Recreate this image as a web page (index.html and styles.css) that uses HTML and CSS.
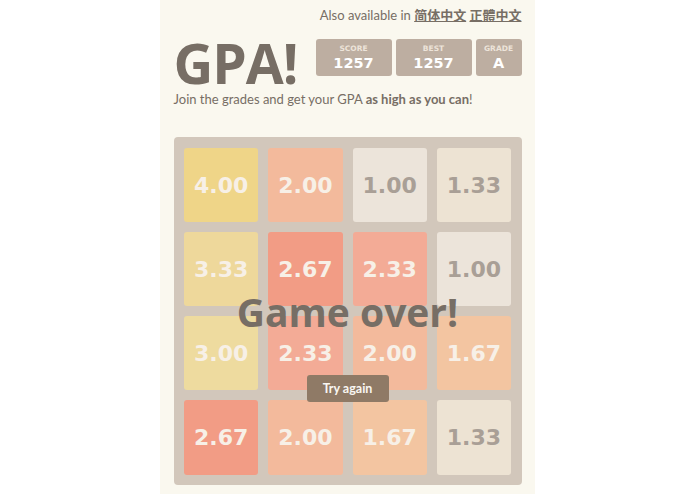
FILE: index.html
```html
<!DOCTYPE html>
<html lang="en">
<head>
<meta charset="utf-8">
<title>GPA!</title>
<link rel="stylesheet" href="styles.css">
</head>
<body>
<div class="page">
  <p class="langs">Also available in <a href="#">简体中文</a> <a href="#">正體中文</a></p>
  <div class="heading">
    <h1 class="title">GPA!</h1>
    <div class="scores">
      <div class="score-box score-wide"><span class="score-label">SCORE</span><span class="score-value">1257</span></div>
      <div class="score-box score-wide"><span class="score-label">BEST</span><span class="score-value">1257</span></div>
      <div class="score-box score-narrow"><span class="score-label">GRADE</span><span class="score-value">A</span></div>
    </div>
  </div>
  <p class="intro">Join the grades and get your GPA <strong>as high as you can</strong>!</p>
  <div class="board">
    <div class="grid">
      <div class="tile t400">4.00</div>
      <div class="tile t200">2.00</div>
      <div class="tile t100">1.00</div>
      <div class="tile t133">1.33</div>
      <div class="tile t333">3.33</div>
      <div class="tile t267">2.67</div>
      <div class="tile t233">2.33</div>
      <div class="tile t100">1.00</div>
      <div class="tile t300">3.00</div>
      <div class="tile t233">2.33</div>
      <div class="tile t200">2.00</div>
      <div class="tile t167">1.67</div>
      <div class="tile t267">2.67</div>
      <div class="tile t200">2.00</div>
      <div class="tile t167">1.67</div>
      <div class="tile t133">1.33</div>
    </div>
    <div class="game-message">
      <p class="over">Game over!</p>
      <a class="retry" href="#">Try again</a>
    </div>
  </div>
</div>
</body>
</html>
```

FILE: styles.css
```css
html, body {
  margin: 0;
  padding: 0;
  background: #ffffff;
}

body {
  font-family: "Open Sans", "Noto Sans CJK SC", sans-serif;
  color: #776e65;
}

.page {
  width: 375px;
  min-height: 494px;
  margin: 0 auto;
  background: #faf8ef;
  padding: 0 13.5px;
  box-sizing: border-box;
  overflow: hidden;
}

.langs {
  margin: 0;
  padding-top: 6px;
  font-family: "Lato", "Noto Sans CJK SC", sans-serif;
  font-size: 13px;
  line-height: 18px;
  text-align: right;
  color: #776e65;
}

.langs a {
  color: #776e65;
  font-weight: bold;
  text-decoration: underline;
  font-family: "Noto Sans CJK SC", sans-serif;
}

.heading {
  display: flex;
  justify-content: space-between;
  align-items: flex-start;
  margin-top: 10.5px;
}

.title {
  margin: 0;
  font-size: 55px;
  line-height: 55px;
  font-weight: bold;
  letter-spacing: -1px;
  color: #776e65;
}

.scores {
  display: flex;
  gap: 4px;
  margin-top: 4.5px;
}

.score-box {
  background: #bdaea1;
  border-radius: 3px;
  height: 37px;
  box-sizing: border-box;
  padding-top: 5px;
  display: flex;
  flex-direction: column;
  align-items: center;
}

.score-wide { width: 76px; }
.score-narrow { width: 46px; }

.score-label {
  font-family: "DejaVu Sans", sans-serif;
  font-size: 7.5px;
  line-height: 10px;
  font-weight: bold;
  color: #ede4da;
}

.score-value {
  font-family: "DejaVu Sans", sans-serif;
  font-size: 14.5px;
  line-height: 19px;
  font-weight: bold;
  color: #ffffff;
}

.intro {
  margin: 0.5px 0 0;
  font-family: "Lato", sans-serif;
  font-size: 13px;
  line-height: 18px;
  color: #776e65;
}

.intro strong {
  font-weight: bold;
}

.board {
  position: relative;
  margin-top: 29px;
  width: 348px;
  height: 348px;
  box-sizing: border-box;
  padding: 10.5px;
  background: #d2c7bb;
  border-radius: 4px;
}

.grid {
  display: grid;
  grid-template-columns: repeat(4, 1fr);
  grid-template-rows: repeat(4, 1fr);
  gap: 10px;
  height: 100%;
}

.tile {
  border-radius: 3px;
  display: flex;
  align-items: center;
  justify-content: center;
  padding-top: 1px;
  font-family: "DejaVu Sans", sans-serif;
  font-size: 22px;
  font-weight: bold;
  color: #f7f0e7;
}

.t100 { background: #ece4da; color: #a99f96; }
.t133 { background: #ede3d3; color: #a99f96; }
.t167 { background: #f3c5a1; }
.t200 { background: #f3ba9c; }
.t233 { background: #f3ab96; }
.t267 { background: #f29c85; }
.t300 { background: #eedb9f; }
.t333 { background: #eed89b; }
.t400 { background: #efd588; }

.game-message {
  position: absolute;
  inset: 0;
  display: flex;
  flex-direction: column;
  align-items: center;
}

.over {
  margin: 153px 0 0;
  font-size: 39px;
  line-height: 44px;
  font-weight: bold;
  color: #776e65;
}

.retry {
  margin-top: 41px;
  width: 82px;
  height: 27px;
  line-height: 27px;
  text-align: center;
  background: #8f7a66;
  color: #f9f6f2;
  border-radius: 3px;
  font-family: "Lato", sans-serif;
  font-size: 12.5px;
  font-weight: bold;
  text-decoration: none;
}
```
